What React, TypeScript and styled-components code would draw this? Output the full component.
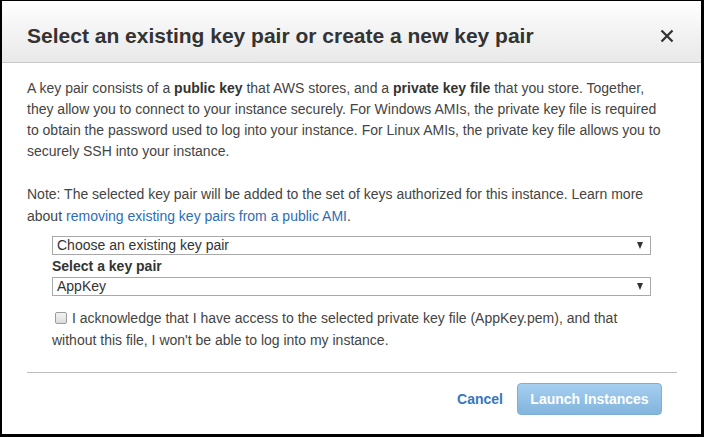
import React from "react";
import styled, { createGlobalStyle } from "styled-components";

const Global = createGlobalStyle`
  html, body { margin: 0; padding: 0; background: #fff; }
  body { font-family: "Liberation Sans", Arial, sans-serif; }
  * { box-sizing: border-box; }
`;

const Frame = styled.div`
  width: 704px;
  height: 437px;
  border-style: solid;
  border-color: #000;
  border-width: 1px 3px 3px 2px;
  background: #fff;
  display: flex;
  flex-direction: column;
  font-family: "Liberation Sans", Arial, sans-serif;
`;

const Header = styled.div`
  height: 62px;
  padding: 8px 27px 0 25px;
  display: flex;
  align-items: center;
  justify-content: space-between;
  background: linear-gradient(to bottom, #ffffff 0%, #f4f4f4 45%, #e9e9e9 100%);
  border-bottom: 1px solid #c9c9c9;
`;

const Title = styled.h1`
  margin: 0;
  font-size: 21px;
  font-weight: bold;
  color: #333;
  line-height: 24px;
`;

const CloseButton = styled.button`
  border: 0;
  background: transparent;
  padding: 0;
  width: 14px;
  height: 14px;
  display: flex;
  cursor: pointer;
`;

const Body = styled.div`
  padding: 15px 24px 0 25px;
  display: flex;
  flex-direction: column;
`;

const Para = styled.p`
  margin: 0 0 21px;
  font-size: 14px;
  line-height: 21px;
  color: #444;
  b { color: #333; }
`;

const NotePara = styled(Para)`
  margin-bottom: 9px;
  line-height: 22px;
`;

const Link = styled.a`
  color: #2e6db5;
  text-decoration: none;
  margin-left: 4px;
`;

const Fields = styled.div`
  padding-left: 25px;
  width: 624px;
  display: flex;
  flex-direction: column;
`;

const SelectBox = styled.div`
  height: 19px;
  border: 1px solid #a9a9a9;
  background: #fff;
  display: flex;
  align-items: center;
  justify-content: space-between;
  padding: 0 7px 0 4px;
  font-size: 14px;
  color: #333;
  line-height: 17px;
`;

const Arrow = styled.span`
  width: 0;
  height: 0;
  border-left: 3.5px solid transparent;
  border-right: 3.5px solid transparent;
  border-top: 7px solid #333;
`;

const Label = styled.div`
  font-size: 14px;
  font-weight: bold;
  color: #333;
  line-height: 21px;
  margin-top: 1px;
`;

const Ack = styled.label`
  display: block;
  margin-top: 11px;
  font-size: 14px;
  line-height: 22px;
  color: #444;
  width: 600px;
`;

const Check = styled.span`
  display: inline-block;
  width: 12px;
  height: 12px;
  margin: 0 5px 0 3px;
  vertical-align: -1px;
  border: 1px solid #9c9c9c;
  border-radius: 2px;
  background: linear-gradient(to bottom, #f4f4f4, #dcdcdc);
`;

const Divider = styled.hr`
  border: 0;
  border-top: 1px solid #bdbdbd;
  margin: 21px 0 0;
  width: 650px;
`;

const Footer = styled.div`
  display: flex;
  justify-content: flex-end;
  align-items: center;
  gap: 14px;
  padding: 10px 15px 0 0;
`;

const CancelLink = styled.a`
  font-size: 14px;
  font-weight: bold;
  color: #3377c4;
  cursor: pointer;
`;

const PrimaryButton = styled.button`
  height: 32px;
  width: 145px;
  padding: 0;
  border: 1px solid #7eaed6;
  border-radius: 4px;
  background: linear-gradient(to bottom, #a6cff0 0%, #93c1e6 50%, #84b5dd 100%);
  color: #fff;
  font-family: "Liberation Sans", Arial, sans-serif;
  font-size: 14px;
  font-weight: bold;
  cursor: default;
`;

const CloseIcon = () => (
  <svg width="14" height="14" viewBox="0 0 14 14">
    <path d="M1.5 1.5 L12.5 12.5 M12.5 1.5 L1.5 12.5" stroke="#333" strokeWidth="2.3" strokeLinecap="butt" />
  </svg>
);

export default function App() {
  return (
    <>
      <Global />
      <Frame>
        <Header>
          <Title>Select an existing key pair or create a new key pair</Title>
          <CloseButton aria-label="Close">
            <CloseIcon />
          </CloseButton>
        </Header>
        <Body>
          <Para>
            A key pair consists of a <b>public key</b> that AWS stores, and a <b>private key file</b> that you store. Together,
            <br />
            they allow you to connect to your instance securely. For Windows AMIs, the private key file is required
            <br />
            to obtain the password used to log into your instance. For Linux AMIs, the private key file allows you to
            <br />
            securely SSH into your instance.
          </Para>
          <NotePara>
            Note: The selected key pair will be added to the set of keys authorized for this instance. Learn more
            <br />
            about<Link href="#">removing existing key pairs from a public AMI</Link>.
          </NotePara>
          <Fields>
            <SelectBox>
              <span>Choose an existing key pair</span>
              <Arrow />
            </SelectBox>
            <Label>Select a key pair</Label>
            <SelectBox>
              <span>AppKey</span>
              <Arrow />
            </SelectBox>
            <Ack>
              <Check />I acknowledge that I have access to the selected private key file (AppKey.pem), and that
              <br />
              without this file, I won't be able to log into my instance.
            </Ack>
          </Fields>
          <Divider />
          <Footer>
            <CancelLink>Cancel</CancelLink>
            <PrimaryButton>Launch Instances</PrimaryButton>
          </Footer>
        </Body>
      </Frame>
    </>
  );
}
